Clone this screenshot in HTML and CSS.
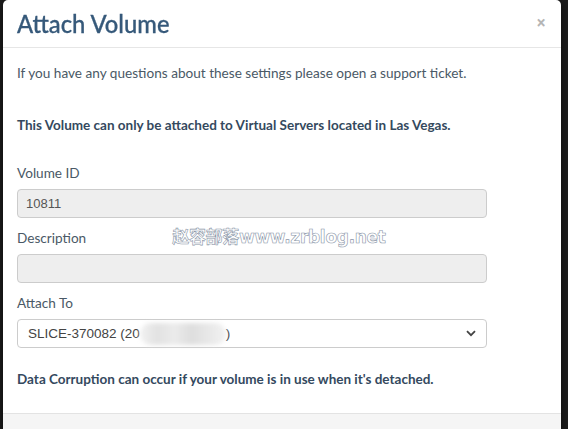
FILE: index.html
```html
<!DOCTYPE html>
<html>
<head>
<meta charset="utf-8">
<link rel="stylesheet" href="styles.css">
</head>
<body>
<div class="backdrop">
  <div class="modal">
    <div class="modal-header">
      <h4 class="modal-title">Attach Volume</h4>
      <span class="close">×</span>
    </div>
    <div class="modal-body">
      <p class="intro">If you have any questions about these settings please open a support ticket.</p>
      <p class="notice">This Volume can only be attached to Virtual Servers located in Las Vegas.</p>
      <div class="form">
        <div class="group">
          <label class="label">Volume ID</label>
          <div class="input disabled">10811</div>
        </div>
        <div class="group">
          <div class="label-row">
            <label class="label">Description</label>
            <span class="watermark">赵容部落www.zrblog.net</span>
          </div>
          <div class="input disabled"></div>
        </div>
        <div class="group">
          <label class="label">Attach To</label>
          <div class="input select">
            <span class="sel-text">SLICE-370082 (20<span class="blur"></span>)</span>
            <svg class="chev" width="10" height="7" viewBox="0 0 10 7"><path d="M1 1.2 L5 5.2 L9 1.2" fill="none" stroke="#444" stroke-width="1.8"/></svg>
          </div>
        </div>
      </div>
      <p class="warning">Data Corruption can occur if your volume is in use when it's detached.</p>
    </div>
    <div class="modal-footer"></div>
  </div>
</div>
</body>
</html>
```

FILE: styles.css
```css
html, body {
  margin: 0;
  padding: 0;
  height: 100%;
  overflow: hidden;
}
body {
  background: #1c1c1c;
  font-family: Lato, "Noto Sans", sans-serif;
}
.backdrop {
  padding-left: 3px;
  height: 100%;
}
.modal {
  width: 558px;
  background: #fff;
  border-radius: 5px;
  box-shadow: 0 3px 8px rgba(0,0,0,0.6);
  height: 460px;
  display: flex;
  flex-direction: column;
}
.modal-header {
  height: 48px;
  box-sizing: border-box;
  border-bottom: 1px solid #e6e6e6;
  display: flex;
  align-items: center;
  justify-content: space-between;
  padding: 0 14px 2px 14px;
}
.modal-title {
  margin: 0;
  font-size: 25px;
  font-weight: 500;
  color: #36597a;
  transform: scaleX(0.95);
  transform-origin: left center;
  white-space: nowrap;
  -webkit-text-stroke: 0.3px #36597a;
}
.close {
  color: #b5b5b5;
  font-family: "Open Sans", sans-serif;
  font-size: 17px;
  font-weight: 700;
  margin-right: 1px;
  margin-top: 0px;
}
.modal-body {
  padding: 16px 14px 0 14px;
  height: 365px;
  box-sizing: border-box;
}
.intro {
  margin: 0;
  font-size: 13.6px;
  color: #4a5966;
  line-height: 18px;
}
.notice {
  margin: 34px 0 0 0;
  font-size: 13.5px;
  font-weight: 700;
  color: #34495e;
  line-height: 18px;
}
.form {
  width: 470px;
  margin-top: 30px;
  display: flex;
  flex-direction: column;
  gap: 11px;
}
.group {
  display: flex;
  flex-direction: column;
  gap: 7px;
}
.label-row {
  display: flex;
  align-items: center;
  gap: 86px;
  height: 18px;
}
.label {
  font-size: 13.6px;
  color: #4a5966;
  line-height: 18px;
}
.input {
  height: 29px;
  box-sizing: border-box;
  border: 1px solid #cccccc;
  border-radius: 4px;
  padding: 0 8px;
  display: flex;
  align-items: center;
  font-family: "Liberation Sans", Arial, sans-serif;
  font-size: 13px;
  color: #555;
}
.disabled {
  background: #eeeeee;
}
.select {
  background: #fff;
  justify-content: space-between;
  padding: 0 10px 0 10px;
}
.sel-text {
  display: flex;
  align-items: center;
  color: #444;
  font-size: 13.5px;
}
.blur {
  display: inline-block;
  width: 86px;
  height: 22px;
  background: linear-gradient(90deg, #f2f2f2, #e2e2e2 20%, #ebebeb 40%, #dedede 60%, #e8e8e8 80%, #f2f2f2);
  border-radius: 11px;
  filter: blur(2px);
}
.watermark {
  font-family: "DejaVu Sans", "Noto Sans CJK SC", sans-serif;
  font-weight: 700;
  font-size: 17px;
  color: #fff;
  -webkit-text-stroke: 0.6px #8a96a8;
  letter-spacing: -0.3px;
  margin-top: -5px;
}
.warning {
  margin: 22px 0 0 0;
  font-size: 13.5px;
  font-weight: 700;
  color: #34495e;
  line-height: 18px;
}
.modal-footer {
  border-top: 1px solid #e3e3e3;
  background: #f5f5f5;
  flex: 1;
}
```
